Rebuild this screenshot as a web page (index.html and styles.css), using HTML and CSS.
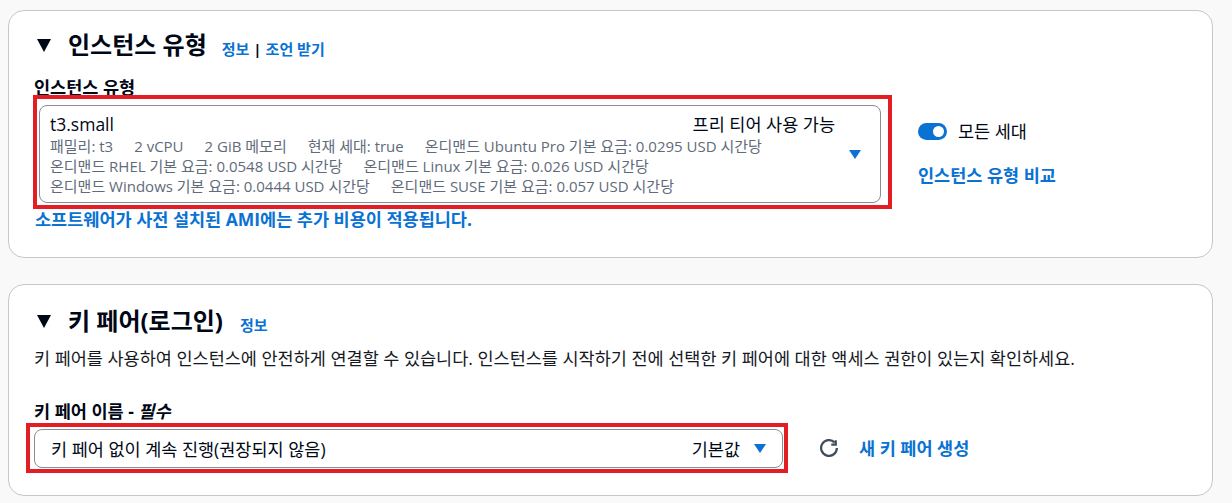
FILE: index.html
```html
<!DOCTYPE html>
<html lang="ko">
<head>
<meta charset="utf-8">
<link rel="stylesheet" href="styles.css">
</head>
<body>
<div class="page">
  <section class="card card-type">
    <h2 class="heading"><span class="caret"></span><span class="heading-text">인스턴스 유형</span><span class="info"><a>정보</a><span class="sep">|</span><a>조언 받기</a></span></h2>
    <div class="type-body">
      <div class="type-main">
        <div class="label">인스턴스 유형</div>
        <div class="mark mark-type">
          <div class="select select-type">
            <div class="select-content">
              <div class="first-line"><span class="name">t3.small</span><span class="tag">프리 티어 사용 가능</span></div>
              <div class="detail"><span>패밀리: t3</span><span>2 vCPU</span><span>2 GiB 메모리</span><span>현재 세대: true</span><span>온디맨드 Ubuntu Pro 기본 요금: 0.0295 USD 시간당</span></div>
              <div class="detail"><span>온디맨드 RHEL 기본 요금: 0.0548 USD 시간당</span><span>온디맨드 Linux 기본 요금: 0.026 USD 시간당</span></div>
              <div class="detail"><span>온디맨드 Windows 기본 요금: 0.0444 USD 시간당</span><span>온디맨드 SUSE 기본 요금: 0.057 USD 시간당</span></div>
            </div>
            <span class="tri"></span>
          </div>
        </div>
        <a class="link-bold">소프트웨어가 사전 설치된 AMI에는 추가 비용이 적용됩니다.</a>
      </div>
      <div class="type-side">
        <div class="toggle-row"><span class="toggle"><span class="knob"></span></span><span>모든 세대</span></div>
        <a class="link-bold compare">인스턴스 유형 비교</a>
      </div>
    </div>
  </section>

  <section class="card card-key">
    <h2 class="heading"><span class="caret"></span><span class="heading-text">키 페어(로그인)</span><span class="info"><a>정보</a></span></h2>
    <p class="desc">키 페어를 사용하여 인스턴스에 안전하게 연결할 수 있습니다. 인스턴스를 시작하기 전에 선택한 키 페어에 대한 액세스 권한이 있는지 확인하세요.</p>
    <div class="label label-key">키 페어 이름 - <i>필수</i></div>
    <div class="key-row">
      <div class="mark mark-key">
        <div class="select select-key">
          <span class="key-value">키 페어 없이 계속 진행(권장되지 않음)</span>
          <span class="key-default">기본값</span>
          <span class="tri"></span>
        </div>
      </div>
      <svg class="refresh" viewBox="0 0 16 16" width="18" height="18" aria-hidden="true">
        <path d="M15 8a7 7 0 1 1-2.05-4.95" fill="none" stroke="#414d5c" stroke-width="2"/>
        <path d="M14 1v4h-4" fill="none" stroke="#414d5c" stroke-width="2" stroke-linejoin="miter"/>
      </svg>
      <a class="link-bold newkey">새 키 페어 생성</a>
    </div>
  </section>
</div>
</body>
</html>
```

FILE: styles.css
```css
* { box-sizing: border-box; }
html, body { margin: 0; padding: 0; }
body {
  background: #f9f9fa;
  font-family: "Open Sans", "Noto Sans CJK KR", sans-serif;
  color: #000716;
  width: 1232px;
  height: 503px;
  overflow: hidden;
}
a { color: #0972d3; text-decoration: none; }
.page {
  padding: 10px 19px 0 8px;
  display: flex;
  flex-direction: column;
  gap: 26px;
}
.card {
  background: #fff;
  border: 1px solid #c6c6cd;
  border-radius: 16px;
  padding: 19px 26px 0 25px;
}
.card-type { height: 248px; }
.card-key { height: 212px; padding-top: 21px; }

.heading {
  margin: 0;
  display: flex;
  align-items: center;
  height: 30px;
  font-size: 24px;
  font-weight: 700;
  line-height: 30px;
}
.caret {
  width: 0; height: 0;
  border-left: 7px solid transparent;
  border-right: 7px solid transparent;
  border-top: 13px solid #000716;
  margin-left: 3px;
  margin-right: 17px;
}
.info {
  font-size: 15px;
  font-weight: 700;
  margin-left: 15px;
  margin-top: 7px;
}
.card-key .info { margin-left: 17px; }
.sep { color: #000716; margin: 0 4px; font-weight: 700; }

.type-body { display: flex; align-items: flex-start; }
.type-main { display: flex; flex-direction: column; }
.label {
  font-size: 17.5px;
  font-weight: 700;
  line-height: 18px;
  margin-top: 18px;
}
.mark { border: 4px solid #e21d24; }
.mark-type {
  margin: -1px 0 0 -1px;
  width: 859px;
  padding: 6px 7px 2px 2px;
}
.select {
  border: 1px solid #8c8c94;
  border-radius: 8px;
  background: #fff;
  display: flex;
  align-items: center;
}
.select-type {
  height: 98px;
  padding: 0 19px 0 10px;
}
.select-content { flex: 1; display: flex; flex-direction: column; }
.first-line {
  display: flex;
  justify-content: space-between;
  font-size: 17.5px;
  line-height: 24px;
}
.detail {
  font-size: 15px;
  line-height: 20px;
  color: #5f6b7a;
  display: flex;
  gap: 21px;
  white-space: nowrap;
}
.tri {
  flex: none;
  width: 0; height: 0;
  border-left: 6px solid transparent;
  border-right: 6px solid transparent;
  border-top: 9px solid #0972d3;
  margin-left: 14px;
}
.link-bold {
  font-weight: 700;
  font-size: 17.5px;
  line-height: 20px;
}
.type-main > .link-bold { margin-left: 1px; }
.type-side {
  padding-top: 60px;
  margin-left: 26px;
  display: flex;
  flex-direction: column;
}
.toggle-row {
  display: flex;
  align-items: center;
  gap: 11px;
  font-size: 17.5px;
  line-height: 22px;
}
.toggle {
  width: 29px; height: 17px;
  border-radius: 9px;
  background: #0972d3;
  position: relative;
}
.knob {
  position: absolute;
  right: 3px; top: 3px;
  width: 11px; height: 11px;
  border-radius: 50%;
  background: #fff;
}
.compare { margin-top: 22px; line-height: 22px; }

.desc {
  margin: 12px 0 0;
  font-size: 17.5px;
  line-height: 20px;
  color: #16191f;
}
.label-key { margin-top: 33px; line-height: 20px; font-size: 17.5px; }
.label-key i { font-style: italic; }
.key-row { display: flex; align-items: center; margin-top: 2px; }
.mark-key {
  margin-left: -8px;
  width: 762px;
  height: 50px;
  padding: 2px 1px 1px 4px;
}
.select-key {
  height: 39px;
  padding: 0 16px 0 16px;
  font-size: 17.5px;
}
.key-value { flex: 1; }
.select-key .tri { margin-left: 14px; border-left-width: 6.5px; border-right-width: 6.5px; }
.refresh { margin-left: 32px; }
.newkey { margin-left: 21px; }
```
